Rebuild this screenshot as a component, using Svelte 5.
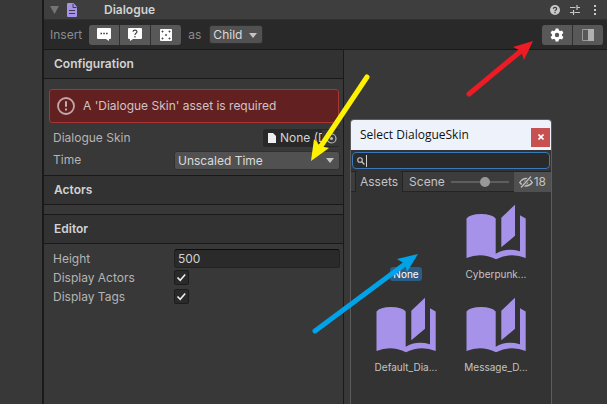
<script>
  let skin = $state('None');
  let height = $state('500');
  let time = $state('Unscaled Time');
  let insertAs = $state('Child');
  let query = $state('');
  let size = $state(60);
  let displayActors = $state(true);
  let displayTags = $state(true);
  const assets = [
    { name: 'None', label: 'None' },
    { name: 'Cyberpunk', label: 'Cyberpunk...' },
    { name: 'Default', label: 'Default_Dia...' },
    { name: 'Message', label: 'Message_D...' }
  ];
</script>

{#snippet caret()}
  <svg class="caret" width="8" height="5" viewBox="0 0 8 5" aria-hidden="true"><path d="M0 0h8L4 5z" fill="#c4c4c4" /></svg>
{/snippet}

{#snippet check(id, label)}
  <div class="row check-row">
    <label for={id}>{label}</label>
    <span class="tick">
      {#if id === 'actors'}
        <input {id} type="checkbox" bind:checked={displayActors} />
      {:else}
        <input {id} type="checkbox" bind:checked={displayTags} />
      {/if}
      <svg width="15" height="15" viewBox="0 0 15 15" aria-hidden="true"><path d="M3.5 7.5l2.7 2.8 5-5.8" fill="none" stroke="#eee" stroke-width="1.6" /></svg>
    </span>
  </div>
{/snippet}

<div class="page">
  <div class="gutter"></div>
  <main>
    <header class="title">
      <svg width="9" height="8" viewBox="0 0 9 8" aria-hidden="true"><path d="M0 0h9L4.500 8z" fill="#747474" /></svg>
      <svg class="doc" width="10" height="14" viewBox="0 0 10 14" aria-hidden="true">
        <path d="M1 0h5.500L10 3.800V13q0 1-1 1H1q-1 0-1-1V1q0-1 1-1z" fill="#a692e8" />
        <path d="M6 .8V4.500h3.500M2 7.500h6M2 10.500h6" stroke="#3d3d3d" fill="none" />
      </svg>
      <h1>Dialogue</h1>
      <button class="bare" aria-label="Help">
        <svg width="10" height="10" viewBox="0 0 10 10"><circle cx="5" cy="5" r="5" fill="#c8c8c8" /><path d="M3.300 3.900Q3.400 2.300 5 2.300T6.700 3.700Q6.700 4.500 5.700 5.100 5 5.500 5 6.200M5 7.100v1.200" stroke="#3d3d3d" stroke-width="1.200" fill="none" /></svg>
      </button>
      <button class="bare" aria-label="Presets">
        <svg width="10" height="10" viewBox="0 0 10 10"><path d="M0 2.500h5.500M7 2.500h3M7 0v5M0 7.500h3M3.500 5v5M4.500 7.500H10" stroke="#c8c8c8" stroke-width="1.200" fill="none" /></svg>
      </button>
      <button class="bare" aria-label="More">
        <svg width="4" height="10" viewBox="0 0 4 10"><path d="M1 0h2v2H1zM1 4h2v2H1zM1 8h2v2H1z" fill="#c8c8c8" /></svg>
      </button>
    </header>

    <div class="toolbar">
      <span class="dim">Insert</span>
      <div class="group">
        <button aria-label="Insert text">
          <svg width="14" height="13" viewBox="0 0 14 13"><path d="M1 0h12q1 0 1 1v9q0 1-1 1h-1v2l-3-2H1q-1 0-1-1V1q0-1 1-1z" fill="#fff" /><path d="M3.500 5.500h1.500M6.300 5.500h1.500M9.100 5.500h1.500" stroke="#333" stroke-width="1.300" /></svg>
        </button>
        <button aria-label="Insert choice">
          <svg width="14" height="13" viewBox="0 0 14 13"><path d="M1 0h12q1 0 1 1v9q0 1-1 1H5l-3 2v-2H1q-1 0-1-1V1q0-1 1-1z" fill="#fff" /><path d="M5 3.800Q5.200 2.200 7 2.200T9 3.800Q9 4.900 7.500 5.600 7 6 7 6.900M7 8v1.400" stroke="#444" stroke-width="1.200" fill="none" /></svg>
        </button>
        <button aria-label="Insert random">
          <svg width="12" height="12" viewBox="0 0 12 12"><rect width="12" height="12" rx="1" fill="#fff" /><path d="M1.500 2.500h2M2.500 1.500v2M8.500 2.500h2M9.500 1.500v2M1.500 9.500h2M2.500 8.500v2M8.500 9.500h2M9.500 8.500v2M5 6h2M6 5v2" stroke="#555" /></svg>
        </button>
      </div>
      <span class="dim">as</span>
      <div class="select child">
        <select aria-label="Insert as" bind:value={insertAs}><option>Child</option><option>Sibling</option></select>
        {@render caret()}
      </div>
      <div class="group right">
        <button aria-label="Settings">
          <svg width="14" height="14" viewBox="-7 -7 14 14"><g fill="#fff"><circle r="5" />{#each [0, 60, 120, 180, 240, 300] as a}<path d="M-1.400-6.600h2.800l.7 3h-4.200z" transform="rotate({a})" />{/each}</g><circle r="2.200" fill="#585858" /></svg>
        </button>
        <button aria-label="Toggle side panel">
          <svg width="12" height="12" viewBox="0 0 12 12"><path d="M.5.5h11v11H.5z" fill="#585858" stroke="#999" /><path d="M6 0h6v12H6z" fill="#b0b0b0" /></svg>
        </button>
      </div>
    </div>

    <div class="body">
      <section class="side">
        <h2>Configuration</h2>
        <div class="fields">
          <div class="alert" role="alert">
            <svg width="18" height="18" viewBox="0 0 18 18" aria-hidden="true"><circle cx="9" cy="9" r="8" fill="none" stroke="#c0a8a8" stroke-width="1.800" /><path d="M9 4.300v5.400M9 11.400v2" stroke="#d0bcbc" stroke-width="1.800" /></svg>
            <span>A 'Dialogue Skin' asset is required</span>
          </div>
          <div class="row">
            <label for="skin">Dialogue Skin</label>
            <button id="skin" class="object">
              <svg width="8" height="10" viewBox="0 0 8 10" aria-hidden="true"><path d="M0 0h5l3 3v7H0z" fill="#eee" /></svg>
              <span class="object-name">None (D</span>
              <span class="pick"><svg width="11" height="11" viewBox="0 0 11 11" aria-hidden="true"><circle cx="5.500" cy="5.500" r="4.500" fill="none" stroke="#bbb" stroke-width="1.200" /><circle cx="5.500" cy="5.500" r="1.500" fill="#bbb" /></svg></span>
            </button>
          </div>
          <div class="row">
            <label for="time">Time</label>
            <div class="select wide">
              <select id="time" bind:value={time}><option>Unscaled Time</option><option>Game Time</option></select>
              {@render caret()}
            </div>
          </div>
        </div>
        <h2>Actors</h2>
        <div class="empty"></div>
        <h2>Editor</h2>
        <div class="fields editor">
          <div class="row check-row"><label for="height">Height</label><input id="height" class="text" type="text" bind:value={height} /></div>
          {@render check('actors', 'Display Actors')}
          {@render check('tags', 'Display Tags')}
        </div>
      </section>
      <section class="canvas"></section>
    </div>
  </main>

  <div class="popup" role="dialog" aria-labelledby="popup-title">
    <div class="popup-title">
      <span id="popup-title">Select DialogueSkin</span>
      <button class="close" aria-label="Close"><svg width="6" height="6" viewBox="0 0 6 6"><path d="M.5.5l5 5M5.500.5l-5 5" stroke="#fff" stroke-width="1.600" /></svg></button>
    </div>
    <div class="search">
      <svg width="8" height="8" viewBox="0 0 8 8" aria-hidden="true"><circle cx="3" cy="3" r="2.300" fill="none" stroke="#c4c4c4" stroke-width="1.100" /><path d="M4.700 4.700L7.500 7.500" stroke="#c4c4c4" stroke-width="1.300" /></svg>
      <span class="cursor"></span>
      <input type="text" aria-label="Search" bind:value={query} />
    </div>
    <div class="tabs">
      <button class="tab active">Assets</button>
      <button class="tab">Scene</button>
      <input type="range" aria-label="Icon size" min="0" max="100" bind:value={size} />
      <button class="hidden-count">
        <svg width="14" height="12" viewBox="0 0 14 12" aria-hidden="true"><path d="M.7 6.500Q3.500 2.500 7 2.500t6.300 4Q10.500 10 7 10T.7 6.500z" fill="none" stroke="#bdbdbd" stroke-width="1.300" /><circle cx="7" cy="6.300" r="2.200" fill="#bdbdbd" /><path d="M2 11.500L12 .5" stroke="#505050" stroke-width="3" /><path d="M2 11.500L12 .5" stroke="#bdbdbd" stroke-width="1.300" /></svg>
        <span>18</span>
      </button>
    </div>
    <div class="grid">
      {#each assets as asset}
        <button class="asset" class:selected={skin === asset.name} onclick={() => (skin = asset.name)}>
          <svg width="60" height="56" viewBox="0 0 60 56" aria-hidden="true">
            {#if asset.name !== 'None'}
              <path d="M.5 14.500Q4 10 15 10t14.700 4.500V49.700Q40 43.500 54 47.300V11.300L59.700 14.500V54Q45 48 30 55.200 15 48 .5 54zM35.300 13.700L49 .7v31L35.300 43.300z" fill="#a692e8" />
            {/if}
          </svg>
          <span>{asset.label}</span>
        </button>
      {/each}
    </div>
  </div>

  <svg class="arrows" width="607" height="404" viewBox="0 0 607 404" aria-hidden="true">
    <g stroke-width="5" stroke-linecap="round">
      <path d="M469 94L521 51" stroke="#ed1c24" /><path d="M533 41L513 47l8 4 3 9z" fill="#ed1c24" />
      <path d="M367 77L321 146" stroke="#fff200" /><path d="M311 161l3-22 6 7 9 2z" fill="#fff200" />
      <path d="M315 331L405 264" stroke="#00a2e8" /><path d="M418 254L397 259l8 5 2 8z" fill="#00a2e8" />
    </g>
  </svg>
</div>

<style>
  :global(body) { margin: 0; background: #383838; }
  .page { position: relative; display: flex; min-height: 100vh; overflow: hidden; background: #383838; color: #c4c4c4; font: 12px/18px Inter, "Liberation Sans", sans-serif; }
  .page :where(button, input, select) { box-sizing: border-box; margin: 0; padding: 0; border: 0; background: none; font: inherit; color: inherit; }
  svg { display: block; flex: none; }
  .gutter { flex: none; width: 42px; border-right: 2px solid #1a1a1a; }
  main { flex: 1; min-width: 0; display: flex; flex-direction: column; }
  .title { display: flex; align-items: center; height: 20px; padding: 0 10px 0 6px; background: #3e3e3e; border-bottom: 1px solid #303030; box-sizing: border-box; }
  h1, h2 { margin: 0; font-size: 12px; line-height: 18px; font-weight: 600; color: #d2d2d2; }
  .doc { margin: 0 27px 0 8px; }
  h1 { flex: 1; }
  .bare { margin-left: 10px; }
  .bare:last-child { margin-left: 13px; }
  .toolbar { display: flex; align-items: center; height: 30px; box-sizing: border-box; padding: 0 4px 0 6px; background: #292929; border-bottom: 1px solid #191919; }
  .dim { color: #8c8c8c; }
  .group { display: flex; gap: 1px; margin: 0 7px; border-radius: 3px; overflow: hidden; background: #303030; }
  .group button { display: flex; align-items: center; justify-content: center; width: 30px; height: 20px; background: #585858; }
  .toolbar .right { margin: 0 0 0 auto; }
  .select { position: relative; display: flex; box-sizing: border-box; border: 1px solid #303030; border-radius: 3px; background: #515151; }
  .select select { appearance: none; width: 100%; padding: 0 16px 0 3px; color: #dcdcdc; }
  .caret { position: absolute; right: 5px; top: 50%; margin-top: -2px; pointer-events: none; }
  .child { width: 54px; height: 19px; margin-left: 8px; }
  .body { flex: 1; display: flex; }
  .side { flex: 0 0 299px; min-width: 0; border-right: 1px solid #1a1a1a; }
  .canvas { flex: 1; }
  h2 { padding: 5px 10px; background: #323232; border-bottom: 1px solid #191919; }
  .fields + h2, .empty + h2 { border-top: 1px solid #191919; }
  .empty { height: 9px; }
  .fields { padding: 10px 3px 3px 5px; }
  .alert { display: flex; align-items: center; gap: 8px; height: 34px; box-sizing: border-box; margin: 0 1px 5px 0; padding: 0 7px; border: 1px solid #a83434; border-radius: 3px; background: #632020; color: #cfc4c4; }
  .row { display: flex; align-items: center; height: 20px; margin-bottom: 2px; padding-left: 4px; }
  .row label { flex: 0 0 121px; color: #b4b4b4; }
  .object { display: flex; align-items: center; width: 77px; height: 18px; margin-left: auto; border-radius: 3px; background: #282828; overflow: hidden; padding-left: 5px; color: #d2d2d2; }
  .object-name { flex: 1; min-width: 0; white-space: nowrap; text-align: left; margin-left: 4px; }
  .pick { position: relative; display: flex; align-items: center; justify-content: center; width: 18px; height: 16px; background: #373737; }
  .wide { flex: 1; height: 19px; }
  .fields.editor { padding-top: 5px; }
  .text { flex: 1; min-width: 0; height: 19px; padding: 0 3px; border: 1px solid #212121; border-top-color: #0d0d0d; border-radius: 3px; background: #2a2a2a; color: #d2d2d2; outline: none; }
  .check-row { height: 19px; margin-bottom: 0; }
  .tick { position: relative; width: 15px; height: 15px; }
  .tick input { display: block; appearance: none; width: 15px; height: 15px; border: 1px solid #1c1c1c; border-radius: 2px; background: #2a2a2a; }
  .tick svg { position: absolute; inset: 0; pointer-events: none; visibility: hidden; }
  .tick input:checked + svg { visibility: visible; }
  .popup { position: absolute; left: 350px; top: 119px; bottom: 0; width: 202px; box-sizing: border-box; display: flex; flex-direction: column; border: 1px solid #5c5c5c; border-bottom: 0; border-radius: 4px 4px 0 0; background: #333; overflow: hidden; }
  .popup-title { display: flex; align-items: center; justify-content: space-between; height: 30px; padding-left: 9px; background: #eef3fb; color: #111; font: 12px/18px "Open Sans", "Noto Sans", sans-serif; }
  .close { display: flex; align-items: center; justify-content: center; width: 19px; height: 19px; margin: 4px 1px 0 0; background: #c75050; }
  .search { display: flex; align-items: center; height: 17px; box-sizing: border-box; margin: 2px 1px; padding: 0 5px 0 4px; border: 1px solid #3a79bb; border-radius: 4px; background: #2a2a2a; }
  .cursor { width: 1px; height: 12px; margin-left: 1px; background: #d2d2d2; }
  .search input { flex: 1; min-width: 0; height: 12px; padding: 0 2px; outline: none; }
  .tabs { display: flex; align-items: center; height: 21px; box-sizing: border-box; padding-left: 4px; background: #3c3c3c; border-top: 1px solid #242424; border-bottom: 1px solid #242424; }
  .tab { height: 21px; padding: 0 6px; }
  .tab.active { background: #333; border: 1px solid #242424; border-width: 0 1px; padding: 0 4px; border-radius: 3px 3px 0 0; }
  .tabs input { appearance: none; flex: 1; min-width: 0; height: 12px; background: linear-gradient(#5e5e5e, #5e5e5e) center / 100% 2px no-repeat; }
  .tabs input::-webkit-slider-thumb { appearance: none; width: 10px; height: 10px; border-radius: 50%; background: #999; }
  .hidden-count { display: flex; align-items: center; gap: 1px; height: 20px; padding: 0 5px; margin-left: 5px; background: #505050; }
  .grid { display: grid; grid-template-columns: 90px 90px; justify-content: center; padding-top: 12px; }
  .asset { display: flex; flex-direction: column; align-items: center; height: 93px; font-size: 10px; line-height: 14px; }
  .asset span { margin-top: 7px; padding: 0 3px; border-radius: 3px; white-space: nowrap; }
  .selected span { background: #2c5d87; color: #fff; }
  .arrows { position: absolute; left: 0; top: 0; pointer-events: none; }
</style>
